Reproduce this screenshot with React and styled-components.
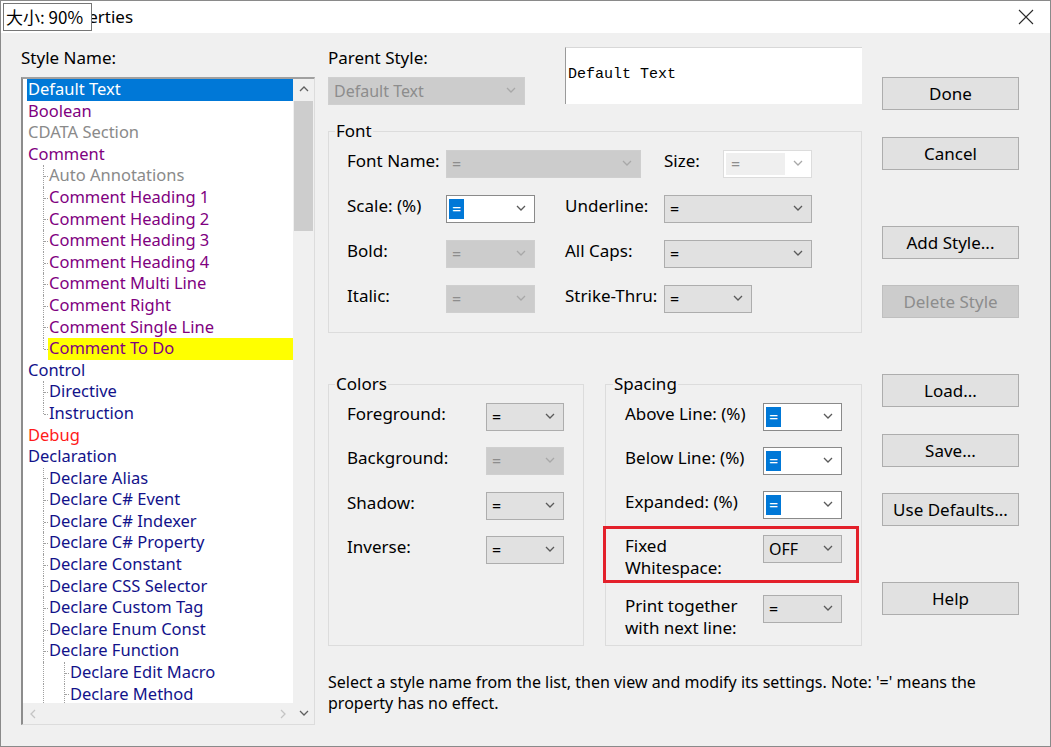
import React from "react";
import styled, { createGlobalStyle } from "styled-components";

const GlobalStyle = createGlobalStyle`
  html, body { margin: 0; padding: 0; background: #f0f0f0; }
  body { font-family: "Noto Sans", "Noto Sans CJK SC", sans-serif; }
  * { box-sizing: border-box; }
`;

const PURPLE = "#800080";
const GRAY = "#8a8a8a";
const NAVY = "#12128a";
const RED = "#ff1a1a";

const styleItems = [
  { text: "Default Text", color: NAVY, guides: [], selected: true },
  { text: "Boolean", color: PURPLE, guides: [] },
  { text: "CDATA Section", color: GRAY, guides: [] },
  { text: "Comment", color: PURPLE, guides: [] },
  { text: "Auto Annotations", color: GRAY, guides: ["branch"] },
  { text: "Comment Heading 1", color: PURPLE, guides: ["branch"] },
  { text: "Comment Heading 2", color: PURPLE, guides: ["branch"] },
  { text: "Comment Heading 3", color: PURPLE, guides: ["branch"] },
  { text: "Comment Heading 4", color: PURPLE, guides: ["branch"] },
  { text: "Comment Multi Line", color: PURPLE, guides: ["branch"] },
  { text: "Comment Right", color: PURPLE, guides: ["branch"] },
  { text: "Comment Single Line", color: PURPLE, guides: ["branch"] },
  { text: "Comment To Do", color: PURPLE, guides: ["last"], marked: true },
  { text: "Control", color: NAVY, guides: [] },
  { text: "Directive", color: NAVY, guides: ["branch"] },
  { text: "Instruction", color: NAVY, guides: ["last"] },
  { text: "Debug", color: RED, guides: [] },
  { text: "Declaration", color: NAVY, guides: [] },
  { text: "Declare Alias", color: NAVY, guides: ["branch"] },
  { text: "Declare C# Event", color: NAVY, guides: ["branch"] },
  { text: "Declare C# Indexer", color: NAVY, guides: ["branch"] },
  { text: "Declare C# Property", color: NAVY, guides: ["branch"] },
  { text: "Declare Constant", color: NAVY, guides: ["branch"] },
  { text: "Declare CSS Selector", color: NAVY, guides: ["branch"] },
  { text: "Declare Custom Tag", color: NAVY, guides: ["branch"] },
  { text: "Declare Enum Const", color: NAVY, guides: ["branch"] },
  { text: "Declare Function", color: NAVY, guides: ["branch"] },
  { text: "Declare Edit Macro", color: NAVY, guides: ["pass", "branch"] },
  { text: "Declare Method", color: NAVY, guides: ["pass", "branch"] },
];

function Chevron({ dir = "down", color = "#606060", size = 10 }) {
  const d = {
    down: "M1 2 L5 6 L9 2",
    up: "M1 6 L5 2 L9 6",
    left: "M6 1 L2 5 L6 9",
    right: "M3 1 L7 5 L3 9",
  }[dir];
  return (
    <svg width={size} height={size} viewBox="0 0 10 10">
      <path d={d} fill="none" stroke={color} strokeWidth="1.3" />
    </svg>
  );
}

function Combo({ variant = "button", width, value = "=", selected }) {
  const arrowColor = variant === "disabled" || variant === "inactive" ? "#a8a8a8" : "#5a5a5a";
  return (
    <ComboBox $variant={variant} $width={width}>
      <ComboValue $variant={variant}>
        {selected ? <SelValue>{value}</SelValue> : value}
      </ComboValue>
      <ComboArrow>
        <Chevron color={arrowColor} />
      </ComboArrow>
    </ComboBox>
  );
}

function Field({ label, labelWidth, combo }) {
  return (
    <FieldRow>
      <FieldLabel $width={labelWidth}>{label}</FieldLabel>
      {combo}
    </FieldRow>
  );
}

export default function App() {
  return (
    <>
      <GlobalStyle />
      <Window>
        <TitleBar>
          <TitleText>Style Properties</TitleText>
          <ZoomBadge>大小: 90%</ZoomBadge>
          <CloseButton>
            <svg width="16" height="16" viewBox="0 0 16 16">
              <path d="M1 1 L15 15 M15 1 L1 15" stroke="#2b2b2b" strokeWidth="1.1" />
            </svg>
          </CloseButton>
        </TitleBar>

        <Body>
          <LeftColumn>
            <Caption>Style Name:</Caption>
            <ListBox>
              <ListContent>
                {styleItems.map((item) => (
                  <ListRow key={item.text}>
                    {item.guides.map((g, i) => (
                      <Guide key={i} $type={g} />
                    ))}
                    <ItemLabel
                      $color={item.selected ? "#ffffff" : item.color}
                      $bg={item.selected ? "#0078d7" : item.marked ? "#ffff00" : "transparent"}
                    >
                      {item.text}
                    </ItemLabel>
                  </ListRow>
                ))}
              </ListContent>
              <VScroll>
                <ScrollButton><Chevron dir="up" color="#606060" /></ScrollButton>
                <Thumb />
                <ScrollTrack />
                <ScrollButton><Chevron dir="down" color="#606060" /></ScrollButton>
              </VScroll>
              <HScroll>
                <ScrollButton><Chevron dir="left" color="#c4c4c4" /></ScrollButton>
                <ScrollButton><Chevron dir="right" color="#c4c4c4" /></ScrollButton>
              </HScroll>
            </ListBox>
          </LeftColumn>

          <MiddleColumn>
            <TopRow>
              <ParentBlock>
                <Caption>Parent Style:</Caption>
                <Combo variant="disabled" width={197} value="Default Text" />
              </ParentBlock>
              <Preview>Default Text</Preview>
            </TopRow>

            <Group $mt={16}>
              <Legend>Font</Legend>
              <GroupBody $gap={17} $pt={9} $pb={19}>
                <FieldRow>
                  <FieldLabel $width={99}>Font Name:</FieldLabel>
                  <Combo variant="disabled" width={195} />
                  <FieldLabel $width={59} $ml={23}>Size:</FieldLabel>
                  <Combo variant="inactive" width={89} />
                </FieldRow>
                <FieldRow>
                  <FieldLabel $width={99}>Scale: (%)</FieldLabel>
                  <Combo variant="field" width={89} selected />
                  <FieldLabel $width={99} $ml={30}>Underline:</FieldLabel>
                  <Combo variant="button" width={148} />
                </FieldRow>
                <FieldRow>
                  <FieldLabel $width={99}>Bold:</FieldLabel>
                  <Combo variant="disabled" width={89} />
                  <FieldLabel $width={99} $ml={30}>All Caps:</FieldLabel>
                  <Combo variant="button" width={148} />
                </FieldRow>
                <FieldRow>
                  <FieldLabel $width={99}>Italic:</FieldLabel>
                  <Combo variant="disabled" width={89} />
                  <FieldLabel $width={99} $ml={30}>Strike-Thru:</FieldLabel>
                  <Combo variant="button" width={88} />
                </FieldRow>
              </GroupBody>
            </Group>

            <GroupPair>
              <Group $width={256}>
                <Legend>Colors</Legend>
                <GroupBody $gap={16.4} $pt={9} $pb={6}>
                  <Field label="Foreground:" labelWidth={139} combo={<Combo width={78} />} />
                  <Field label="Background:" labelWidth={139} combo={<Combo variant="disabled" width={78} />} />
                  <Field label="Shadow:" labelWidth={139} combo={<Combo width={78} />} />
                  <Field label="Inverse:" labelWidth={139} combo={<Combo width={78} />} />
                </GroupBody>
              </Group>
              <Group $width={257} $pl={19}>
                <Legend>Spacing</Legend>
                <GroupBody $gap={16} $pt={9} $pb={6}>
                  <Field label="Above Line: (%)" labelWidth={138} combo={<Combo variant="field" width={79} selected />} />
                  <Field label="Below Line: (%)" labelWidth={138} combo={<Combo variant="field" width={79} selected />} />
                  <Field label="Expanded: (%)" labelWidth={138} combo={<Combo variant="field" width={79} selected />} />
                  <Marked>
                    <Field label={<>Fixed<br />Whitespace:</>} labelWidth={138} combo={<Combo width={79} value="OFF" />} />
                    <RedFrame />
                  </Marked>
                  <Field label={<>Print together<br />with next line:</>} labelWidth={138} combo={<Combo width={79} />} />
                </GroupBody>
              </Group>
            </GroupPair>
          </MiddleColumn>

          <ButtonColumn>
            <DialogButton>Done</DialogButton>
            <DialogButton $mt={27}>Cancel</DialogButton>
            <DialogButton $mt={56}>Add Style...</DialogButton>
            <DialogButton $mt={26} disabled>Delete Style</DialogButton>
            <DialogButton $mt={56}>Load...</DialogButton>
            <DialogButton $mt={27}>Save...</DialogButton>
            <DialogButton $mt={26}>Use Defaults...</DialogButton>
            <DialogButton $mt={56}>Help</DialogButton>
          </ButtonColumn>

          <Hint>
            Select a style name from the list, then view and modify its settings. Note: '=' means the
            property has no effect.
          </Hint>
        </Body>
      </Window>
    </>
  );
}

const Window = styled.div`
  width: 1051px;
  height: 747px;
  border: 1px solid #8a8a8a;
  display: flex;
  flex-direction: column;
  overflow: hidden;
  font-size: 17px;
  color: #000;
`;

const TitleBar = styled.div`
  position: relative;
  height: 32px;
  flex-shrink: 0;
  background: #ffffff;
  display: flex;
  align-items: center;
  padding-left: 7px;
`;

const TitleText = styled.div`
  font-size: 17px;
  line-height: 22px;
  color: #000;
`;

const ZoomBadge = styled.div`
  position: absolute;
  left: 2px;
  top: 2px;
  width: 89px;
  height: 28px;
  border: 1px solid #767676;
  background: #ffffff;
  font-family: "Noto Sans CJK SC", "Noto Sans", sans-serif;
  font-size: 17px;
  line-height: 26px;
  padding-left: 2px;
  white-space: nowrap;
  overflow: hidden;
`;

const CloseButton = styled.div`
  margin-left: auto;
  width: 46px;
  height: 32px;
  display: flex;
  align-items: center;
  justify-content: center;
  margin-right: 1px;
`;

const Body = styled.div`
  flex: 1;
  display: grid;
  grid-template-columns: 294px 547px 157px;
  grid-template-rows: auto 1fr;
  align-items: start;
  padding: 14px 0 0 20px;
  background: #f0f0f0;
`;

const LeftColumn = styled.div`
  grid-column: 1;
  grid-row: 1 / span 2;
  display: flex;
  flex-direction: column;
`;

const Caption = styled.div`
  font-size: 17px;
  line-height: 22px;
  height: 22px;
  margin-bottom: 8px;
  white-space: nowrap;
`;

const ListBox = styled.div`
  height: 648px;
  background: #ffffff;
  border: 1px solid #dcdcdc;
  border-left: 2px solid #8c8c8c;
  border-top: 2px solid #a0a0a0;
  display: grid;
  grid-template-columns: 1fr 21px;
  grid-template-rows: 1fr 21px;
`;

const ListContent = styled.div`
  grid-column: 1;
  grid-row: 1;
  overflow: hidden;
  padding-left: 4px;
`;

const ListRow = styled.div`
  display: flex;
  height: 21.6px;
  line-height: 20px;
  white-space: nowrap;
`;

const Guide = styled.span`
  position: relative;
  flex: 0 0 21px;
  &::before {
    content: "";
    position: absolute;
    left: 16px;
    top: 0;
    height: ${(p) => (p.$type === "last" ? "50%" : "100%")};
    border-left: 1px dotted #a0a0a0;
  }
  &::after {
    content: "";
    display: ${(p) => (p.$type === "pass" ? "none" : "block")};
    position: absolute;
    left: 17px;
    top: 50%;
    width: 4px;
    border-top: 1px dotted #a0a0a0;
  }
`;

const ItemLabel = styled.span`
  flex: 1;
  padding-left: 1px;
  color: ${(p) => p.$color};
  background: ${(p) => p.$bg};
  font-size: 16.5px;
`;

const VScroll = styled.div`
  grid-column: 2;
  grid-row: 1 / span 2;
  background: #f0f0f0;
  display: flex;
  flex-direction: column;
`;

const HScroll = styled.div`
  grid-column: 1;
  grid-row: 2;
  background: #f0f0f0;
  display: flex;
  justify-content: space-between;
`;

const ScrollButton = styled.div`
  width: 21px;
  height: 21px;
  flex-shrink: 0;
  display: flex;
  align-items: center;
  justify-content: center;
`;

const Thumb = styled.div`
  height: 130px;
  margin: 1px 1px 0;
  background: #cdcdcd;
`;

const ScrollTrack = styled.div`
  flex: 1;
`;

const MiddleColumn = styled.div`
  grid-column: 2;
  grid-row: 1;
  width: 534px;
  margin-left: 13px;
  display: flex;
  flex-direction: column;
`;

const TopRow = styled.div`
  display: flex;
  align-items: flex-start;
`;

const ParentBlock = styled.div`
  display: flex;
  flex-direction: column;
`;

const Preview = styled.div`
  margin-left: auto;
  width: 297px;
  height: 57px;
  background: #ffffff;
  border-left: 1px solid #9a9a9a;
  border-top: 1px solid #d8d8d8;
  font-family: "Liberation Mono", monospace;
  font-size: 15px;
  line-height: 18px;
  padding: 18px 0 0 2px;
  white-space: pre;
`;

const ComboBox = styled.div`
  width: ${(p) => p.$width}px;
  height: 28px;
  flex-shrink: 0;
  display: flex;
  align-items: center;
  background: ${(p) =>
    p.$variant === "disabled" ? "#cccccc" : p.$variant === "button" ? "#e1e1e1" : "#ffffff"};
  border: 1px solid
    ${(p) =>
      p.$variant === "disabled"
        ? "#cfcfcf"
        : p.$variant === "button"
        ? "#adadad"
        : p.$variant === "field"
        ? "#8a8a8a"
        : "#dcdcdc"};
`;

const ComboValue = styled.div`
  flex: 1;
  align-self: stretch;
  display: flex;
  align-items: center;
  font-size: 16px;
  white-space: nowrap;
  overflow: hidden;
  padding-left: ${(p) => (p.$variant === "field" ? "2px" : "5px")};
  color: ${(p) => (p.$variant === "disabled" || p.$variant === "inactive" ? "#8d8d8d" : "#000")};
  background: ${(p) => (p.$variant === "inactive" ? "#efefef" : "transparent")};
  margin: ${(p) => (p.$variant === "inactive" ? "2px 0 2px 2px" : "0")};
`;

const SelValue = styled.span`
  display: inline-block;
  background: #0078d7;
  color: #ffffff;
  height: 20px;
  line-height: 20px;
  padding: 0 3px;
`;

const ComboArrow = styled.div`
  width: 26px;
  display: flex;
  align-items: center;
  justify-content: center;
`;

const Group = styled.fieldset`
  margin: ${(p) => p.$mt || 0}px 0 0 0;
  width: ${(p) => (p.$width ? `${p.$width}px` : "auto")};
  min-width: 0;
  border: 1px solid #dcdcdc;
  padding: 0 0 0 ${(p) => p.$pl || 18}px;
`;

const Legend = styled.legend`
  font-size: 17px;
  line-height: 20px;
  padding: 0 1px;
  margin-left: -12px;
`;

const GroupBody = styled.div`
  display: flex;
  flex-direction: column;
  align-items: flex-start;
  gap: ${(p) => p.$gap}px;
  padding-top: ${(p) => p.$pt}px;
  padding-bottom: ${(p) => p.$pb}px;
`;

const FieldRow = styled.div`
  display: flex;
  align-items: flex-start;
`;

const FieldLabel = styled.div`
  width: ${(p) => p.$width}px;
  margin-left: ${(p) => p.$ml || 0}px;
  flex-shrink: 0;
  font-size: 17px;
  line-height: 22px;
  white-space: nowrap;
`;

const GroupPair = styled.div`
  display: flex;
  justify-content: space-between;
  margin-top: 41px;
`;

const Marked = styled.div`
  position: relative;
`;

const RedFrame = styled.div`
  position: absolute;
  left: -22px;
  right: -17px;
  top: -9px;
  bottom: -4px;
  border: 3px solid #e3202b;
  pointer-events: none;
`;

const Hint = styled.p`
  grid-column: 2 / span 2;
  grid-row: 2;
  margin: 26px 0 0 13px;
  font-size: 16px;
  line-height: 21px;
`;

const ButtonColumn = styled.div`
  grid-column: 3;
  grid-row: 1;
  margin-left: 20px;
  margin-top: 30px;
  width: 137px;
  display: flex;
  flex-direction: column;
`;

const DialogButton = styled.button`
  height: 33px;
  margin-top: ${(p) => p.$mt || 0}px;
  background: ${(p) => (p.disabled ? "#cccccc" : "#e1e1e1")};
  border: 1px solid ${(p) => (p.disabled ? "#bfbfbf" : "#adadad")};
  color: ${(p) => (p.disabled ? "#8d8d8d" : "#000")};
  font-family: "Noto Sans", sans-serif;
  font-size: 17px;
  padding: 0;
`;
